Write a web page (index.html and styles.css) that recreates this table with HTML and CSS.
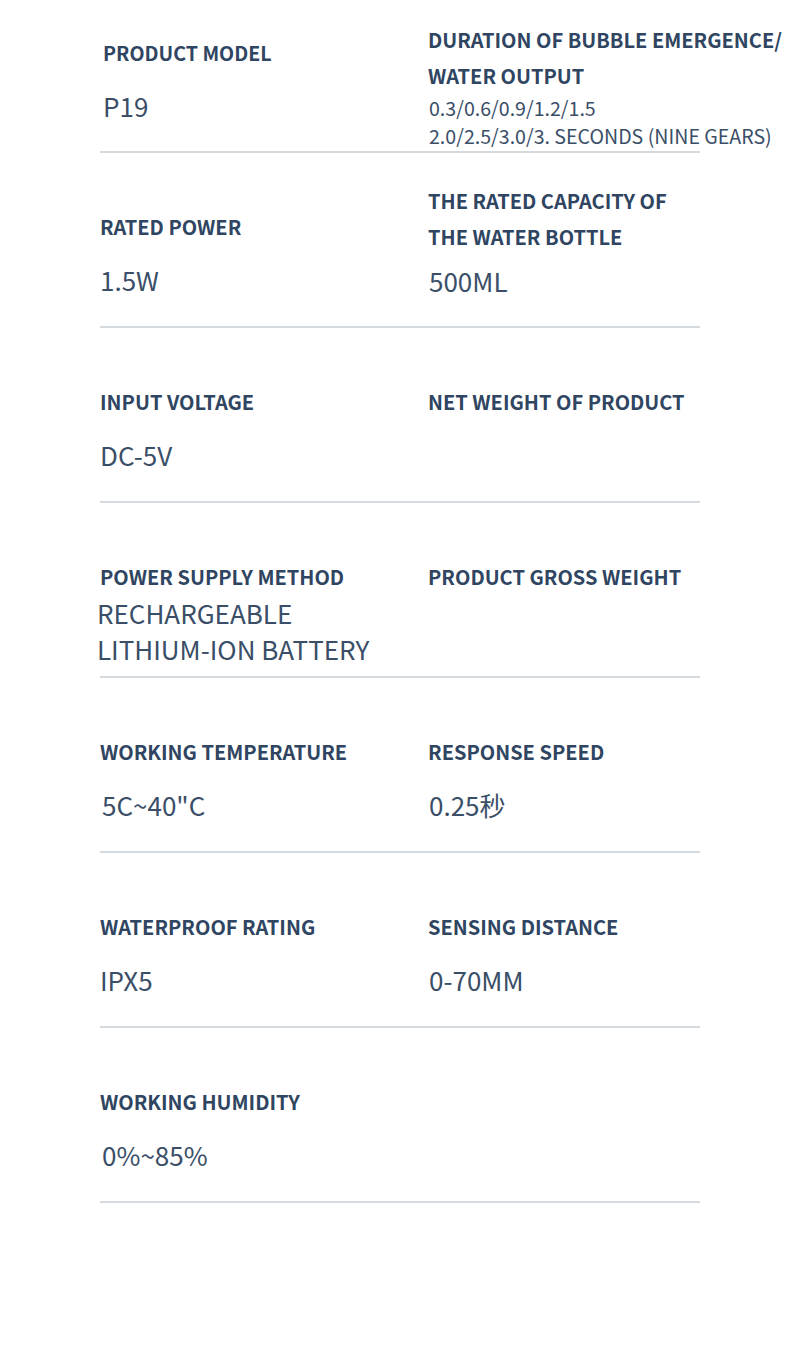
FILE: index.html
```html
<!DOCTYPE html>
<html lang="en">
<head>
<meta charset="utf-8">
<title>Specifications</title>
<link rel="stylesheet" href="styles.css">
</head>
<body>
<main class="spec">
  <section class="row row--first">
    <div class="cell cell--first cell--inset">
      <div class="label label--narrow">PRODUCT MODEL</div>
      <div class="value">P19</div>
    </div>
    <div class="cell cell--first-right">
      <div class="label">DURATION OF BUBBLE EMERGENCE/<br>WATER OUTPUT</div>
      <div class="value value--small">0.3/0.6/0.9/1.2/1.5<br>2.0/2.5/3.0/3. SECONDS (NINE GEARS)</div>
    </div>
  </section>

  <section class="row">
    <div class="cell">
      <div class="label">RATED POWER</div>
      <div class="value">1.5W</div>
    </div>
    <div class="cell cell--right cell--tall">
      <div class="label">THE RATED CAPACITY OF<br>THE WATER BOTTLE</div>
      <div class="value">500ML</div>
    </div>
  </section>

  <section class="row">
    <div class="cell">
      <div class="label">INPUT VOLTAGE</div>
      <div class="value">DC-5V</div>
    </div>
    <div class="cell cell--right">
      <div class="label">NET WEIGHT OF PRODUCT</div>
    </div>
  </section>

  <section class="row">
    <div class="cell cell--tight">
      <div class="label">POWER SUPPLY METHOD</div>
      <div class="value value--shift">RECHARGEABLE<br>LITHIUM-ION BATTERY</div>
    </div>
    <div class="cell cell--right cell--tight">
      <div class="label">PRODUCT GROSS WEIGHT</div>
    </div>
  </section>

  <section class="row">
    <div class="cell">
      <div class="label">WORKING TEMPERATURE</div>
      <div class="value value--nudge">5C~40"C</div>
    </div>
    <div class="cell cell--right">
      <div class="label">RESPONSE SPEED</div>
      <div class="value">0.25秒</div>
    </div>
  </section>

  <section class="row">
    <div class="cell">
      <div class="label">WATERPROOF RATING</div>
      <div class="value">IPX5</div>
    </div>
    <div class="cell cell--right">
      <div class="label">SENSING DISTANCE</div>
      <div class="value">0-70MM</div>
    </div>
  </section>

  <section class="row">
    <div class="cell">
      <div class="label">WORKING HUMIDITY</div>
      <div class="value value--nudge">0%~85%</div>
    </div>
    <div class="cell"></div>
  </section>
</main>
</body>
</html>
```

FILE: styles.css
```css
html, body {
  margin: 0;
  padding: 0;
  background: #ffffff;
}

body {
  width: 790px;
  height: 1355px;
  overflow: hidden;
  font-family: "Noto Sans CJK SC", "Noto Sans", sans-serif;
  color: #2f4561;
}

.spec {
  margin-left: 100px;
  width: 600px;
}

.row {
  box-sizing: border-box;
  height: 175px;
  display: grid;
  grid-template-columns: 328px 1fr;
  border-bottom: 2px solid #d5dae0;
}

.row--first {
  height: 153px;
}

.cell {
  display: flex;
  flex-direction: column;
  padding-top: 56px;
  white-space: nowrap;
}

.cell--right .value {
  padding-left: 1px;
}

.cell--first {
  padding-top: 35px;
}

.cell--inset {
  padding-left: 3px;
}

.cell--first-right {
  padding-top: 22px;
}

.cell--first-right .value {
  margin-top: 0;
  padding-left: 1px;
}

.cell--tall {
  padding-top: 30px;
}

.cell--tall .value {
  margin-top: 8px;
}

.cell--tight .value {
  margin-top: 0;
}

.label {
  font-size: 20px;
  font-weight: 700;
  line-height: 36px;
  color: #2f4561;
}

.label--narrow {
  font-size: 19.6px;
}

.value {
  margin-top: 17px;
  font-size: 26px;
  font-weight: 400;
  line-height: 36px;
  color: #3a4e68;
}

.value--small {
  font-size: 19.6px;
  line-height: 28px;
}

.value--shift {
  margin-left: -3px;
}

.value--nudge {
  padding-left: 2px;
}
```
